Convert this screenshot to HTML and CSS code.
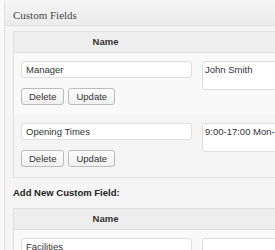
FILE: index.html
```html
<!DOCTYPE html>
<html lang="en">
<head>
    <meta charset="UTF-8">
    <meta name="viewport" content="width=device-width, initial-scale=1.0">
    <title>Custom Fields</title>
    <link rel="stylesheet" href="styles.css">
</head>
<body>
    <div class="postbox">
        <h3 class="hndle">Custom Fields</h3>
        <div class="inside">
            <table class="list-table">
                <colgroup><col class="col-name"><col></colgroup>
                <thead>
                    <tr><th>Name</th><th></th></tr>
                </thead>
                <tbody>
                    <tr class="alternate">
                        <td class="cell-name">
                            <input type="text" value="Manager">
                            <div class="actions">
                                <button type="button">Delete</button>
                                <button type="button">Update</button>
                            </div>
                        </td>
                        <td class="cell-value"><textarea rows="2">John Smith</textarea></td>
                    </tr>
                    <tr>
                        <td class="cell-name">
                            <input type="text" value="Opening Times">
                            <div class="actions">
                                <button type="button">Delete</button>
                                <button type="button">Update</button>
                            </div>
                        </td>
                        <td class="cell-value"><textarea rows="2">9:00-17:00 Mon-Sat</textarea></td>
                    </tr>
                </tbody>
            </table>

            <p class="add-title">Add New Custom Field:</p>

            <table class="list-table new-field">
                <colgroup><col class="col-name"><col></colgroup>
                <thead>
                    <tr><th>Name</th><th></th></tr>
                </thead>
                <tbody>
                    <tr>
                        <td class="cell-name"><input type="text" value="Facilities"></td>
                        <td class="cell-value"><textarea rows="2"></textarea></td>
                    </tr>
                </tbody>
            </table>
        </div>
    </div>
</body>
</html>
```

FILE: styles.css
```css
html {
    overflow: hidden;
}

body {
    margin: 0;
    background-color: #f9f9f9;
    font-family: "Liberation Sans", Arial, sans-serif;
    font-size: 9.5px;
    color: #333;
}

.postbox {
    width: 520px;
    margin: -1px 0 0 4px;
    background-color: #f5f5f5;
    border: 1px solid #dfdfdf;
    border-radius: 3px;
}

.hndle {
    margin: 0;
    padding: 7px 8px 2px;
    line-height: 16px;
    font-family: "Liberation Serif", Georgia, serif;
    font-size: 11px;
    font-weight: normal;
    color: #464646;
    background: linear-gradient(#f5f5f5, #ececec);
    border-bottom: 1px solid #dfdfdf;
}

.inside {
    padding: 5px 0 20px 8px;
}

.list-table {
    width: 482px;
    table-layout: fixed;
    border-collapse: separate;
    border-spacing: 0;
    border: 1px solid #dfdfdf;
    background-color: #f5f5f5;
}

.list-table .col-name {
    width: 183px;
}

.list-table th {
    padding: 0;
    height: 20px;
    line-height: 20px;
    font-weight: bold;
    text-align: center;
    color: #333;
    background-color: #eeeeee;
    border-bottom: 1px solid #dfdfdf;
}

.list-table td {
    vertical-align: top;
    padding: 8px 5px 10px 7px;
}

.list-table .cell-value {
    padding-left: 5px;
}

.list-table tr.alternate td,
.new-field td {
    background-color: #f9f9f9;
}

input[type="text"],
textarea {
    display: block;
    box-sizing: border-box;
    width: 100%;
    margin: 0;
    font-family: "Liberation Sans", Arial, sans-serif;
    font-size: 9.5px;
    color: #333;
    background-color: #fff;
    border: 1px solid #dfdfdf;
    border-radius: 3px;
}

input[type="text"] {
    height: 17px;
    padding: 0 4px;
}

textarea {
    height: 29px;
    padding: 2px 2px;
    resize: none;
    overflow: hidden;
    line-height: 12px;
}

.actions {
    display: flex;
    gap: 4px;
    margin-top: 10px;
}

.actions button {
    height: 17px;
    padding: 0 7px;
    font-family: "Liberation Sans", Arial, sans-serif;
    font-size: 9.5px;
    color: #333;
    background: linear-gradient(#fefefe, #f0f0f0);
    border: 1px solid #bbb;
    border-radius: 3px;
}

.add-title {
    margin: 9px 0;
    line-height: 12px;
    font-weight: bold;
    color: #222;
}
```
